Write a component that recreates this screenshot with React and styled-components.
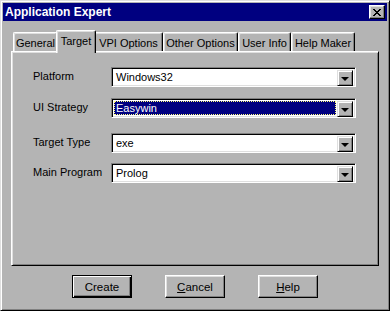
import React from 'react';
import styled, { createGlobalStyle } from 'styled-components';

const GlobalStyle = createGlobalStyle`
  body {
    margin: 0;
    font-family: 'Liberation Sans', Arial, sans-serif;
    font-size: 11px;
  }
`;

const FACE = '#b4b4b4';

const Window = styled.div`
  width: 390px;
  height: 311px;
  box-sizing: border-box;
  background: ${FACE};
  border: 1px solid;
  border-color: #dfdfdf #000 #000 #dfdfdf;
  box-shadow: inset 1px 1px #fff, inset -1px -1px #808080;
  padding: 2px;
  display: flex;
  flex-direction: column;
`;

const TitleBar = styled.div`
  height: 18px;
  background: #000080;
  display: flex;
  align-items: center;
  justify-content: space-between;
  padding: 0 2px;
`;

const Title = styled.span`
  color: #fff;
  font-weight: bold;
  font-size: 12px;
`;

const CloseButton = styled.div`
  width: 16px;
  height: 14px;
  box-sizing: border-box;
  background: ${FACE};
  border: 1px solid;
  border-color: #fff #000 #000 #fff;
  box-shadow: inset -1px -1px #808080, inset 1px 1px #dfdfdf;
  display: flex;
  align-items: center;
  justify-content: center;
`;

const TabStrip = styled.div`
  display: flex;
  align-items: flex-end;
  margin: 9px 8px 0;
  padding-left: 2px;
  height: 21px;
`;

const Tab = styled.div`
  position: relative;
  z-index: ${p => (p.$active ? 2 : 1)};
  box-sizing: border-box;
  width: ${p => p.$w}px;
  height: ${p => (p.$active ? 23 : 19)}px;
  margin: ${p => (p.$active ? '0 -2px -2px' : '0')};
  background: ${FACE};
  border-left: 1px solid #fff;
  border-top: 1px solid #fff;
  border-right: 1px solid #000;
  border-radius: 2px 2px 0 0;
  box-shadow: inset -1px 0 #808080, inset 1px 1px #dfdfdf;
  text-align: center;
  line-height: 16px;
  padding-top: 2px;
  color: #000;
  white-space: nowrap;
`;

const Panel = styled.div`
  margin: 0 8px;
  height: 215px;
  box-sizing: border-box;
  border: 1px solid;
  border-color: #fff #000 #000 #fff;
  box-shadow: inset 1px 1px #dfdfdf, inset -1px -1px #808080;
  padding: 15px 0 0 21px;
  display: flex;
  flex-direction: column;
`;

const Row = styled.div`
  display: flex;
  align-items: center;
  margin-top: ${p => p.$gap || 0}px;
`;

const Label = styled.div`
  width: 78px;
  color: #000;
  margin-top: -2px;
`;

const Combo = styled.div`
  width: 245px;
  height: 20px;
  box-sizing: border-box;
  background: #fff;
  border: 1px solid;
  border-color: #808080 #fff #fff #808080;
  box-shadow: inset 1px 1px #000, inset -1px -1px #dfdfdf;
  padding: 2px;
  display: flex;
`;

const Value = styled.div`
  flex: 1;
  margin-right: 1px;
  padding-left: 2px;
  line-height: 14px;
  color: ${p => (p.$selected ? '#fff' : '#000')};
  background: ${p => (p.$selected ? '#000080' : 'transparent')};
  outline: ${p => (p.$selected ? '1px dotted #ffff80' : 'none')};
  outline-offset: -1px;
`;

const DropButton = styled.div`
  width: 16px;
  height: 16px;
  box-sizing: border-box;
  background: ${FACE};
  border: 1px solid;
  border-color: #dfdfdf #000 #000 #dfdfdf;
  box-shadow: inset 1px 1px #fff, inset -1px -1px #808080;
  display: flex;
  align-items: center;
  justify-content: center;
  &::after {
    content: '';
    border-left: 4px solid transparent;
    border-right: 4px solid transparent;
    border-top: 4px solid #000;
    margin-top: 1px;
  }
`;

const ButtonRow = styled.div`
  display: flex;
  justify-content: center;
  gap: 33px;
  margin-top: 9px;
`;

const Button = styled.div`
  width: 60px;
  height: 23px;
  box-sizing: border-box;
  background: ${FACE};
  border: 1px solid;
  border-color: ${p => (p.$default ? '#000' : '#fff #000 #000 #fff')};
  box-shadow: ${p =>
    p.$default
      ? 'inset 1px 1px #fff, inset -1px -1px #000, inset -2px -2px #808080'
      : 'inset -1px -1px #808080, inset 1px 1px #dfdfdf'};
  display: flex;
  align-items: center;
  justify-content: center;
  color: #000;
  font-size: 11.5px;
  u {
    text-decoration: underline;
  }
`;

const tabs = [
  { name: 'General', w: 45 },
  { name: 'Target', w: 40, active: true },
  { name: 'VPI Options', w: 69 },
  { name: 'Other Options', w: 75 },
  { name: 'User Info', w: 53 },
  { name: 'Help Maker', w: 64 },
];

const fields = [
  { label: 'Platform', value: 'Windows32', gap: 0 },
  { label: 'UI Strategy', value: 'Easywin', gap: 11, selected: true },
  { label: 'Target Type', value: 'exe', gap: 15 },
  { label: 'Main Program', value: 'Prolog', gap: 10 },
];

export default function App() {
  return (
    <>
      <GlobalStyle />
      <Window>
        <TitleBar>
          <Title>Application Expert</Title>
          <CloseButton>
            <svg width="8" height="7" viewBox="0 0 8 7" shapeRendering="crispEdges">
              <path d="M0 0h2v1h-2zM6 0h2v1h-2zM1 1h2v1h-2zM5 1h2v1h-2zM2 2h4v1h-4zM3 3h2v1h-2zM2 4h4v1h-4zM1 5h2v1h-2zM5 5h2v1h-2zM0 6h2v1h-2zM6 6h2v1h-2z" fill="#000" />
            </svg>
          </CloseButton>
        </TitleBar>
        <TabStrip>
          {tabs.map(t => (
            <Tab key={t.name} $w={t.w} $active={t.active}>{t.name}</Tab>
          ))}
        </TabStrip>
        <Panel>
          {fields.map(f => (
            <Row key={f.label} $gap={f.gap}>
              <Label>{f.label}</Label>
              <Combo>
                <Value $selected={f.selected}>{f.value}</Value>
                <DropButton />
              </Combo>
            </Row>
          ))}
        </Panel>
        <ButtonRow>
          <Button $default>Create</Button>
          <Button><span><u>C</u>ancel</span></Button>
          <Button><span><u>H</u>elp</span></Button>
        </ButtonRow>
      </Window>
    </>
  );
}
